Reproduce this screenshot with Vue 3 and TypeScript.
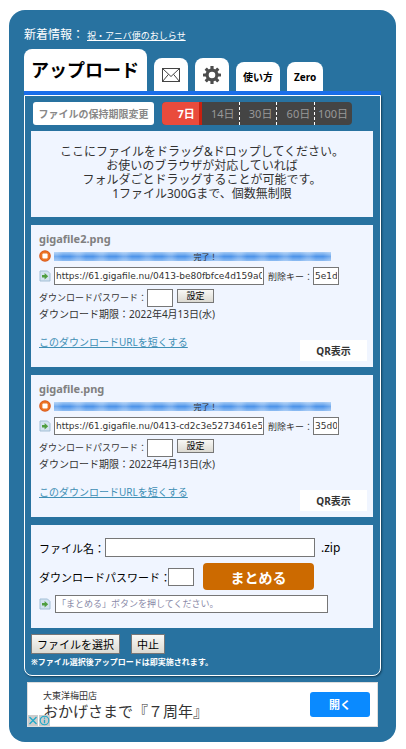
<script setup lang="ts">
import { ref } from 'vue'

interface UploadedFile {
  id: string
  name: string
  url: string
  deleteKey: string
  password: string
}

const files = ref<UploadedFile[]>([
  { id: 'f1', name: 'gigafile2.png', url: 'https://61.gigafile.nu/0413-be80fbfce4d159a0', deleteKey: '5e1d', password: '' },
  { id: 'f2', name: 'gigafile.png', url: 'https://61.gigafile.nu/0413-cd2c3e5273461e55', deleteKey: '35d0', password: '' },
])

const periods: number[] = [7, 14, 30, 60, 100]
const period = ref<number>(7)
const zipName = ref<string>('')
const zipPassword = ref<string>('')
</script>

<template>
  <main class="page">
    <p class="news">
      <span>新着情報：</span>
      <a href="#">祝・アニバ便のおしらせ</a>
    </p>

    <nav class="tabs">
      <a href="#" class="tab tab-main">アップロード</a>
      <a href="#" class="tab tab-icon" aria-label="メール">
        <svg width="18" height="14" viewBox="0 0 18 14" fill="none" stroke="#444" stroke-width="1">
          <rect x="0.5" y="0.5" width="17" height="13" />
          <path d="M0.5 0.5 L9 8.5 L17.5 0.5 M0.5 13.5 L6.5 6.3 M17.5 13.5 L11.5 6.3" />
        </svg>
      </a>
      <a href="#" class="tab tab-icon" aria-label="設定">
        <svg width="18" height="18" viewBox="-9 -9 18 18">
          <g fill="#4d4d4d">
            <rect v-for="n in 8" :key="n" x="-1.6" y="-9" width="3.2" height="5" rx="0.5" :transform="`rotate(${n * 45})`" />
          </g>
          <circle r="4.9" fill="none" stroke="#4d4d4d" stroke-width="3.2" />
        </svg>
      </a>
      <a href="#" class="tab tab-small">使い方</a>
      <a href="#" class="tab tab-small">Zero</a>
    </nav>

    <section class="panel">
      <div class="period-row">
        <button type="button" class="period-change">ファイルの保持期限変更</button>
        <div class="periods">
          <button
            v-for="p in periods"
            :key="p"
            type="button"
            class="period"
            :class="{ active: p === period }"
            @click="period = p"
          >{{ p }}日</button>
        </div>
      </div>

      <div class="drop">
        <p>ここにファイルをドラッグ&amp;ドロップしてください。</p>
        <p>お使いのブラウザが対応していれば</p>
        <p>フォルダごとドラッグすることが可能です。</p>
        <p>1ファイル300Gまで、個数無制限</p>
      </div>

      <article v-for="f in files" :key="f.id" class="card">
        <h2 class="name">{{ f.name }}</h2>
        <div class="row progress-row">
          <svg class="icon" width="12" height="12" viewBox="0 0 12 12">
            <circle cx="6" cy="6" r="5.8" fill="#d9581a" />
            <circle cx="6" cy="6" r="4.8" fill="#ec7426" />
            <rect x="3.4" y="3.4" width="5.2" height="5.2" rx="1" fill="#fff" />
          </svg>
          <div class="bar">完了！</div>
        </div>
        <div class="row url-row">
          <svg class="icon" width="12" height="12" viewBox="0 0 12 12">
            <path d="M1 1 H8.5 L11 3.5 V11 H1 Z" fill="#d3e3f0" stroke="#a3bfd6" />
            <path d="M3 4.9 H5.6 V2.9 L9.2 6.2 L5.6 9.5 V7.5 H3 Z" fill="#4f9e3f" />
          </svg>
          <input v-model="f.url" class="box url" type="text" readonly aria-label="ダウンロードURL" />
          <label class="key-label" :for="f.id + '-key'">削除キー：</label>
          <input :id="f.id + '-key'" v-model="f.deleteKey" class="box short" type="text" readonly />
        </div>
        <div class="row">
          <label class="pass-label" :for="f.id + '-pass'">ダウンロードパスワード：</label>
          <input :id="f.id + '-pass'" v-model="f.password" class="box short" type="text" />
          <button type="button" class="native set">設定</button>
        </div>
        <p class="term">ダウンロード期限：2022年4月13日(水)</p>
        <div class="foot">
          <a href="#">このダウンロードURLを短くする</a>
          <button type="button" class="qr">QR表示</button>
        </div>
      </article>

      <form class="card zip" @submit.prevent>
        <div class="row">
          <label class="zip-label" for="zip-name">ファイル名：</label>
          <input id="zip-name" v-model="zipName" class="box zip-name" type="text" />
          <span class="ext">.zip</span>
        </div>
        <div class="row zip-pass">
          <label class="zip-pass-label" for="zip-pass">ダウンロードパスワード：</label>
          <input id="zip-pass" v-model="zipPassword" class="box short" type="text" />
          <button type="submit" class="bundle">まとめる</button>
        </div>
        <div class="row">
          <svg class="icon" width="12" height="12" viewBox="0 0 12 12">
            <path d="M1 1 H8.5 L11 3.5 V11 H1 Z" fill="#d3e3f0" stroke="#a3bfd6" />
            <path d="M3 4.9 H5.6 V2.9 L9.2 6.2 L5.6 9.5 V7.5 H3 Z" fill="#4f9e3f" />
          </svg>
          <input class="box zip-url" type="text" readonly placeholder="「まとめる」ボタンを押してください。" aria-label="まとめURL" />
        </div>
      </form>

      <div class="actions">
        <button type="button" class="native">ファイルを選択</button>
        <button type="button" class="native">中止</button>
      </div>
      <p class="note">※ファイル選択後アップロードは即実施されます。</p>
    </section>

    <aside class="ad">
      <div class="ad-text">
        <span class="ad-shop">大東洋梅田店</span>
        <span class="ad-title">おかげさまで『７周年』</span>
      </div>
      <a href="#" class="ad-open">開く</a>
      <div class="ad-badges">
        <svg width="10" height="11" viewBox="0 0 10 11">
          <rect width="10" height="11" fill="#ccc" />
          <path d="M1.5 2 L8.5 9 M8.5 2 L1.5 9" stroke="#1fa9c9" stroke-width="1.3" />
        </svg>
        <svg width="11" height="11" viewBox="0 0 11 11">
          <rect width="11" height="11" fill="#ccc" />
          <circle cx="5.5" cy="5.5" r="4.3" fill="none" stroke="#1fa9c9" stroke-width="1.1" />
          <path d="M5.5 4.7 V8.3 M5.5 2.6 V3.8" stroke="#1fa9c9" stroke-width="1.3" />
        </svg>
      </div>
    </aside>
  </main>
</template>

<style>
body {
  background: #fff;
}
</style>

<style scoped>
.page,
.page * {
  box-sizing: border-box;
}

.page {
  margin: 10px 10px 7px 9px;
  padding: 15px;
  border-radius: 16px;
  background: #2872a0;
  color: #333;
  font-family: "Noto Sans", "Noto Sans CJK JP", sans-serif;
  font-size: 12px;
}

button,
input {
  margin: 0;
  font-family: inherit;
}

p,
h2 {
  margin: 0;
}

.news {
  display: flex;
  align-items: center;
  gap: 3px;
  height: 18px;
  color: #fff;
}

.news a {
  padding-top: 2px;
  color: #fff;
  font-size: 9px;
}

.tabs {
  display: flex;
  align-items: flex-end;
  gap: 7px;
  margin-top: 6px;
  border-bottom: 4px solid #1a6eea;
}

.tab {
  display: flex;
  align-items: center;
  justify-content: center;
  border-radius: 8px 8px 0 0;
  background: #fff;
  color: #000;
  font-weight: 700;
  text-decoration: none;
}

.tab-main {
  height: 42px;
  padding: 0 8px 2px 7px;
  font-size: 18px;
}

.tab-icon {
  width: 34px;
  height: 33px;
}

.tab-small {
  height: 29px;
  padding: 0 7px;
  font-size: 10px;
}

.panel {
  padding: 6px 7px 6px 6px;
  border: 1px solid #fff;
  border-radius: 0 0 8px 8px;
  box-shadow: 1px 1px 2px #123f5c;
}

.period-row {
  display: flex;
  gap: 8px;
  height: 23px;
  padding: 0 21px 0 2px;
}

.period-change {
  width: 121px;
  padding: 0;
  border: 0;
  border-radius: 3px;
  background: #fff;
  color: #888;
  font-size: 10px;
  font-weight: 700;
}

.periods {
  display: flex;
  flex: 1;
  overflow: hidden;
  border-radius: 4px;
  background: #444;
}

.period {
  flex: 1;
  padding: 0 4px 2px 0;
  border: 0;
  border-right: 1px dashed #fff;
  background: none;
  color: #999;
  font-size: 11px;
  text-align: right;
}

.period:last-child {
  border-right: 0;
}

.period.active {
  border-right: 3px solid #c9200f;
  background: #e94b3c;
  color: #fff;
  font-weight: 700;
}

.drop {
  margin-top: 6px;
  padding: 14px 0 16px;
  background: #f0f5ff;
  line-height: 14px;
  text-align: center;
}

.card {
  margin-top: 8px;
  padding: 5px 6px 6px 8px;
  background: #f0f5ff;
}

.name {
  height: 19px;
  color: #808080;
  font-size: 11px;
  line-height: 18px;
}

.row {
  display: flex;
  align-items: center;
}

.icon {
  flex: none;
  margin-right: 3px;
}

.progress-row {
  height: 14px;
  margin-bottom: 4px;
}

.bar {
  flex: 0 1 277px;
  height: 9px;
  background:
    repeating-linear-gradient(90deg, rgba(255, 255, 255, 0.22) 0 3px, transparent 9px 16px, rgba(255, 255, 255, 0.22) 23px),
    linear-gradient(#a5cbf5, #4f95ea 50%, #8fbdf2);
  color: #333;
  font-size: 8px;
  line-height: 9px;
  text-align: center;
  text-indent: 26px;
}

.url-row {
  margin-bottom: 4px;
}

.box {
  height: 18px;
  padding: 0 1px;
  border: 1px solid #767676;
  border-radius: 0;
  outline: 0;
  background: #fff;
  color: #333;
  font-family: "DejaVu Sans", "Noto Sans CJK JP", sans-serif;
  font-size: 9px;
}

.url {
  flex: 0 1 210px;
  min-width: 0;
}

.short {
  flex: none;
  width: 26px;
}

.key-label {
  flex: none;
  padding-left: 4px;
  font-size: 9px;
}

.pass-label {
  flex: none;
  font-size: 9px;
  line-height: 16px;
}

.native {
  padding: 0 5px;
  border: 1px solid #777;
  border-radius: 0;
  background: linear-gradient(#f8f8f6, #dcdad2);
  color: #000;
  font-size: 11px;
}

.set {
  align-self: flex-start;
  width: 37px;
  height: 14px;
  margin-left: 4px;
  padding: 0;
  font-size: 9px;
  line-height: 12px;
}

.term {
  font-size: 10px;
  line-height: 14px;
}

.foot {
  display: flex;
  align-items: flex-start;
  justify-content: space-between;
  margin-top: 12px;
}

.foot a {
  color: #3f8fb5;
  font-size: 10px;
  line-height: 18px;
}

.qr {
  width: 67px;
  height: 21px;
  margin-top: 7px;
  padding: 0;
  border: 0;
  background: #fff;
  color: #333;
  font-size: 10px;
  font-weight: 700;
}

.zip {
  padding-top: 13px;
  padding-bottom: 15px;
  color: #000;
}

.zip-label {
  flex: none;
  width: 66px;
  font-size: 11px;
}

.zip-name {
  flex: 0 1 210px;
  min-width: 0;
  height: 19px;
}

.ext {
  padding-left: 6px;
}

.zip-pass {
  margin: 6px 0 5px;
}

.zip-pass-label {
  flex: none;
  width: 129px;
  font-size: 11px;
  white-space: nowrap;
}

.bundle {
  width: 111px;
  height: 27px;
  margin-left: 9px;
  padding: 0;
  border: 0;
  border-radius: 4px;
  background: #cc6a00;
  color: #fff;
  font-size: 14px;
  font-weight: 700;
}

.zip-url {
  flex: 0 1 273px;
  min-width: 0;
  margin-left: 1px;
}

.zip-url::placeholder {
  color: #8a8aa8;
}

.actions {
  display: flex;
  gap: 11px;
  margin-top: 6px;
}

.actions .native {
  height: 20px;
}

.note {
  margin-top: 1px;
  color: #fff;
  font-size: 8px;
  font-weight: 700;
  line-height: 14px;
}

.ad {
  position: relative;
  display: flex;
  align-items: center;
  justify-content: space-between;
  height: 45px;
  margin: 6px 3px 0;
  padding: 0 7px 0 15px;
  border: 1px solid #ddd;
  background: #fff;
}

.ad-text {
  display: flex;
  flex-direction: column;
}

.ad-shop {
  font-size: 9px;
  line-height: 12px;
}

.ad-title {
  font-size: 15px;
  line-height: 18px;
}

.ad-open {
  width: 60px;
  border-radius: 3px;
  background: #0a8aff;
  color: #fff;
  font-size: 11px;
  font-weight: 700;
  line-height: 25px;
  text-align: center;
  text-decoration: none;
}

.ad-badges {
  position: absolute;
  bottom: 0;
  left: 0;
  display: flex;
  gap: 1px;
}
</style>
